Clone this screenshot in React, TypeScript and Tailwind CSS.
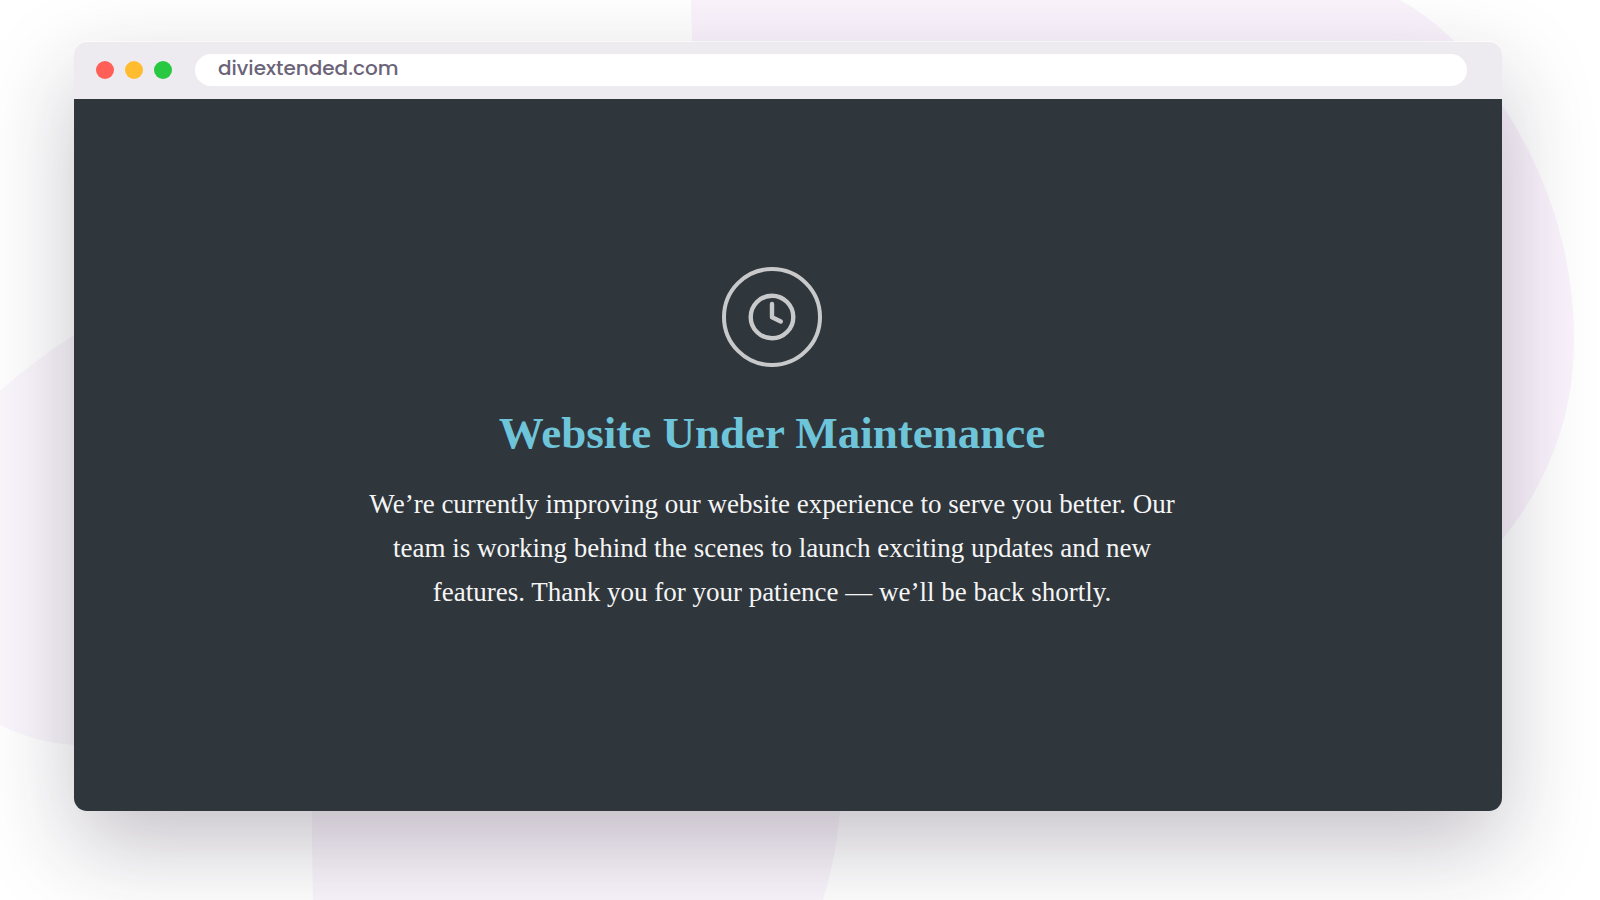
import React from "react";

const Backdrop = () => {
  return (
    <svg
      className="absolute inset-0 h-full w-full"
      viewBox="0 0 1600 900"
      preserveAspectRatio="none"
      fill="#faf3fc"
      aria-hidden="true"
    >
      <path d="M691 0H1400C1440 22 1474 56 1502 105C1546 172 1574 250 1574 340C1574 420 1546 485 1502 540C1300 700 691 500 691 0Z" />
      <path fill="#faf6fc" d="M0 391Q32 362 74 335L300 400V745H74Q34 742 0 725Z" />
      <path fill="#faf5fc" d="M312 780H842Q840 845 823 900H313Q312 860 312 780Z" />
    </svg>
  );
};

const TitleBar = () => {
  return (
    <div className="flex h-[57px] items-center bg-[#eeebf0] pr-[35px] pb-px pl-[22px]">
      <div className="flex gap-[11px]">
        <span className="size-[18px] rounded-full bg-[#ff5f57]" />
        <span className="size-[18px] rounded-full bg-[#febc2e]" />
        <span className="size-[18px] rounded-full bg-[#28c840]" />
      </div>
      <input
        type="text"
        aria-label="Address"
        defaultValue="diviextended.com"
        className="ml-[23px] h-8 min-w-0 flex-1 rounded-full bg-white px-[23px] pb-1 font-['Poppins','Inter',sans-serif] text-[20px] font-medium text-[#6b6478] outline-none"
      />
    </div>
  );
};

const ClockIcon = () => {
  return (
    <svg
      className="size-[102px]"
      viewBox="0 0 102 102"
      fill="none"
      stroke="#c8c9ca"
      strokeWidth="4"
      strokeLinecap="round"
      strokeLinejoin="round"
      aria-hidden="true"
    >
      <circle cx="51" cy="51" r="48" />
      <circle cx="51" cy="51" r="21.3" strokeWidth="4.4" />
      <path d="M51 38V51.3L59.8 55.5" strokeWidth="4.4" />
    </svg>
  );
};

const Message = () => {
  return (
    <main className="flex flex-col items-center bg-[#2f363c] pt-[167px] pr-8 pb-[197px] text-center font-['Liberation_Serif',serif]">
      <ClockIcon />
      <h1 className="mt-9 text-[45px] leading-[58px] font-bold text-[#6ec4d9]">
        Website Under Maintenance
      </h1>
      <p className="mt-5 max-w-[820px] text-[27px] leading-[44px] text-[#f5f5f5]">
        We’re currently improving our website experience to serve you better. Our
        team is working behind the scenes to launch exciting updates and new
        features. Thank you for your patience — we’ll be back shortly.
      </p>
    </main>
  );
};

export default function App() {
  return (
    <div className="relative min-h-screen overflow-hidden bg-white pt-[42px] pr-[98px] pb-[89px] pl-[74px]">
      <Backdrop />
      <div className="relative rounded-[13px] shadow-[0_35px_90px_rgba(40,28,52,0.27)]">
        <div className="overflow-hidden rounded-[13px] shadow-[0_-1px_0_rgba(255,255,255,0.6)]">
          <TitleBar />
          <Message />
        </div>
      </div>
    </div>
  );
}
